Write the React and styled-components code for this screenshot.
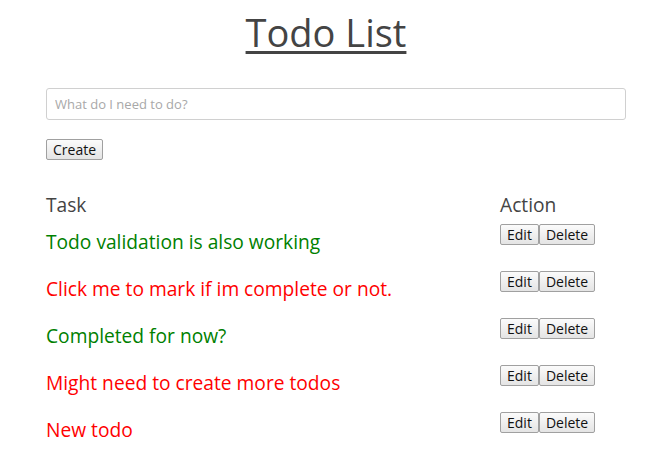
import React, { useState } from "react";
import styled, { createGlobalStyle } from "styled-components";

const GlobalStyles = createGlobalStyle`
  body {
    margin: 0;
    background: #fff;
    font-family: "Open Sans", "Noto Sans", sans-serif;
  }
`;

const initialTodos = [
  { task: "Todo validation is also working", done: true },
  { task: "Click me to mark if im complete or not.", done: false },
  { task: "Completed for now?", done: true },
  { task: "Might need to create more todos", done: false },
  { task: "New todo", done: false },
];

const App = () => {
  const [todos, setTodos] = useState(initialTodos);

  const toggle = (i) =>
    setTodos(todos.map((t, idx) => (idx === i ? { ...t, done: !t.done } : t)));

  return (
    <Page>
      <GlobalStyles />
      <Title>Todo List</Title>
      <Content>
        <Form onSubmit={(e) => e.preventDefault()}>
          <Input placeholder="What do I need to do?" />
          <div>
            <Button type="submit">Create</Button>
          </div>
        </Form>
        <Table>
          <HeadRow>
            <HeadCell>Task</HeadCell>
            <HeadCell>Action</HeadCell>
          </HeadRow>
          {todos.map((todo, i) => (
            <Row key={i}>
              <TaskCell done={todo.done} onClick={() => toggle(i)}>
                {todo.task}
              </TaskCell>
              <Actions>
                <Button>Edit</Button>
                <Button>Delete</Button>
              </Actions>
            </Row>
          ))}
        </Table>
      </Content>
    </Page>
  );
};

const Page = styled.div`
  padding-top: 11px;
`;

const Title = styled.h1`
  margin: 0;
  padding-left: 3px;
  text-align: center;
  font-size: 38px;
  font-weight: 400;
  line-height: 42px;
  color: #444;
  text-decoration: underline;
  text-decoration-thickness: 3px;
  text-underline-offset: 4px;
`;

const Content = styled.div`
  width: 580px;
  margin-left: 46px;
`;

const Form = styled.form`
  margin-top: 35px;
  display: flex;
  flex-direction: column;
  gap: 18px;
`;

const Input = styled.input`
  box-sizing: border-box;
  width: 580px;
  height: 32px;
  padding: 0 8px;
  border: 1px solid #d0d0d0;
  border-radius: 3px;
  font-family: "Open Sans", sans-serif;
  font-size: 13px;
  color: #333;
  &::placeholder {
    color: #a8a8a8;
  }
`;

const Button = styled.button`
  height: 21px;
  padding: 0 6px;
  border: 1px solid #a0a0a0;
  border-radius: 2px;
  background: linear-gradient(#fbfbfb, #e4e4e4);
  font-family: "Open Sans", sans-serif;
  font-size: 14px;
  line-height: 19px;
  color: #111;
`;

const Table = styled.div`
  margin-top: 32px;
`;

const HeadRow = styled.div`
  display: grid;
  grid-template-columns: 1fr 126px;
  height: 32px;
`;

const HeadCell = styled.div`
  font-size: 19.2px;
  line-height: 26px;
  color: #444;
`;

const Row = styled.div`
  display: grid;
  grid-template-columns: 1fr 126px;
  height: 47px;
`;

const TaskCell = styled.div`
  padding-top: 4px;
  font-size: 19.2px;
  line-height: 28px;
  color: ${(p) => (p.done ? "#008000" : "#ff0000")};
  cursor: pointer;
`;

const Actions = styled.div`
  display: flex;
  align-items: flex-start;
`;

export default App;
